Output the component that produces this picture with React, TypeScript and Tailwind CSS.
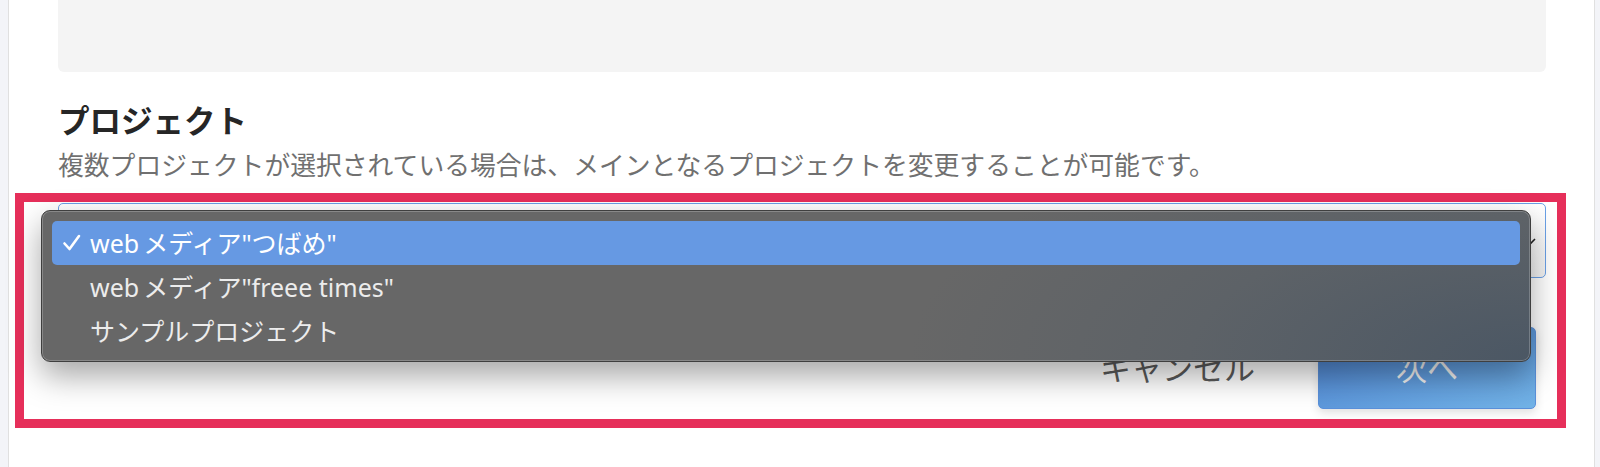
import React from "react";

const FONT = "font-['Noto_Sans','Noto_Sans_CJK_JP',sans-serif]";

function Check() {
  return (
    <svg width="20" height="20" viewBox="0 0 20 20" className="text-white">
      <path d="M2.5 10.5 L7.5 16 L17 3" fill="none" stroke="currentColor" strokeWidth="2.6" strokeLinecap="round" strokeLinejoin="round" />
    </svg>
  );
}

function MenuItem({ web, rest, selected }: { web?: string; rest: string; selected?: boolean }) {
  return (
    <div
      className={
        "flex h-[44px] items-center rounded-[5px] pl-[10px] text-[25px] leading-none " +
        (selected ? "bg-[#6699e3] text-white" : "text-[#ececec]")
      }
    >
      <span className="flex w-[28px] items-center">{selected ? <Check /> : null}</span>
      {web ? <span className="mr-[4px]">{web}</span> : null}
      <span>{rest}</span>
    </div>
  );
}

export default function App() {
  return (
    <div className={"flex min-h-[467px] w-[1600px] overflow-hidden bg-white " + FONT}>
      <div className="w-[8px] shrink-0 bg-[#f3f4f8]" />
      <div className="w-px shrink-0 bg-[#e0e0e0]" />
      <main className="relative w-[1585px] shrink-0 pl-[49px] pr-[48px]">
        <div className="h-[72px] rounded-b-[6px] bg-[#f4f4f4]" />
        <h2 className="mt-[29px] text-[31.5px] font-bold leading-[40px] text-[#262626]">
          プロジェクト
        </h2>
        <p className="mt-[7px] text-[25.8px] leading-[34px] text-[#707070]">
          複数プロジェクトが選択されている場合は、メインとなるプロジェクトを変更することが可能です。
        </p>
        <div className="mt-[21px] flex h-[75px] items-center justify-end rounded-[5px] border border-[#6aa0e6] bg-gradient-to-b from-white to-[#f3f3f3] pr-[8px]">
          <svg width="12" height="10" viewBox="0 0 12 10" className="text-[#222]">
            <path d="M2 3 L6 7 L10 3" fill="none" stroke="currentColor" strokeWidth="1.6" />
          </svg>
        </div>
        <div className="mt-[49px] flex items-center justify-end pr-[10px]">
          <span className="mr-[63px] text-[31px] leading-none text-[#5a5a5a]">キャンセル</span>
          <button className="flex h-[82px] w-[218px] items-center justify-center rounded-[5px] border border-[#5a90da] bg-gradient-to-br from-[#4b7fcf] to-[#72b3e7] text-[31px] leading-none text-[#f2f2f2] shadow-[0_4px_10px_rgba(0,0,0,0.12)]">
            次へ
          </button>
        </div>

        {/* annotation frame */}
        <div className="pointer-events-none absolute left-[6px] top-[193px] h-[235px] w-[1551px] border-[9px] border-[#e62f5a]" />

        {/* open dropdown menu */}
        <div className="absolute left-[32px] top-[210px] h-[152px] w-[1490px] rounded-[9px] border border-[#3f3f3f] bg-[radial-gradient(620px_260px_at_100%_100%,#4b5764_0%,#5d6267_55%,#676767_100%)] px-[10px] pt-[10px] shadow-[0_14px_32px_rgba(0,0,0,0.35),inset_0_0_0_1px_rgba(255,255,255,0.22)]">
          <MenuItem web="web" rest={'メディア"つばめ"'} selected />
          <MenuItem web="web" rest={'メディア"freee times"'} />
          <MenuItem rest="サンプルプロジェクト" />
        </div>
      </main>
      <div className="w-px shrink-0 bg-[#e0e0e0]" />
      <div className="flex-1 bg-[#f3f4f8]" />
    </div>
  );
}
